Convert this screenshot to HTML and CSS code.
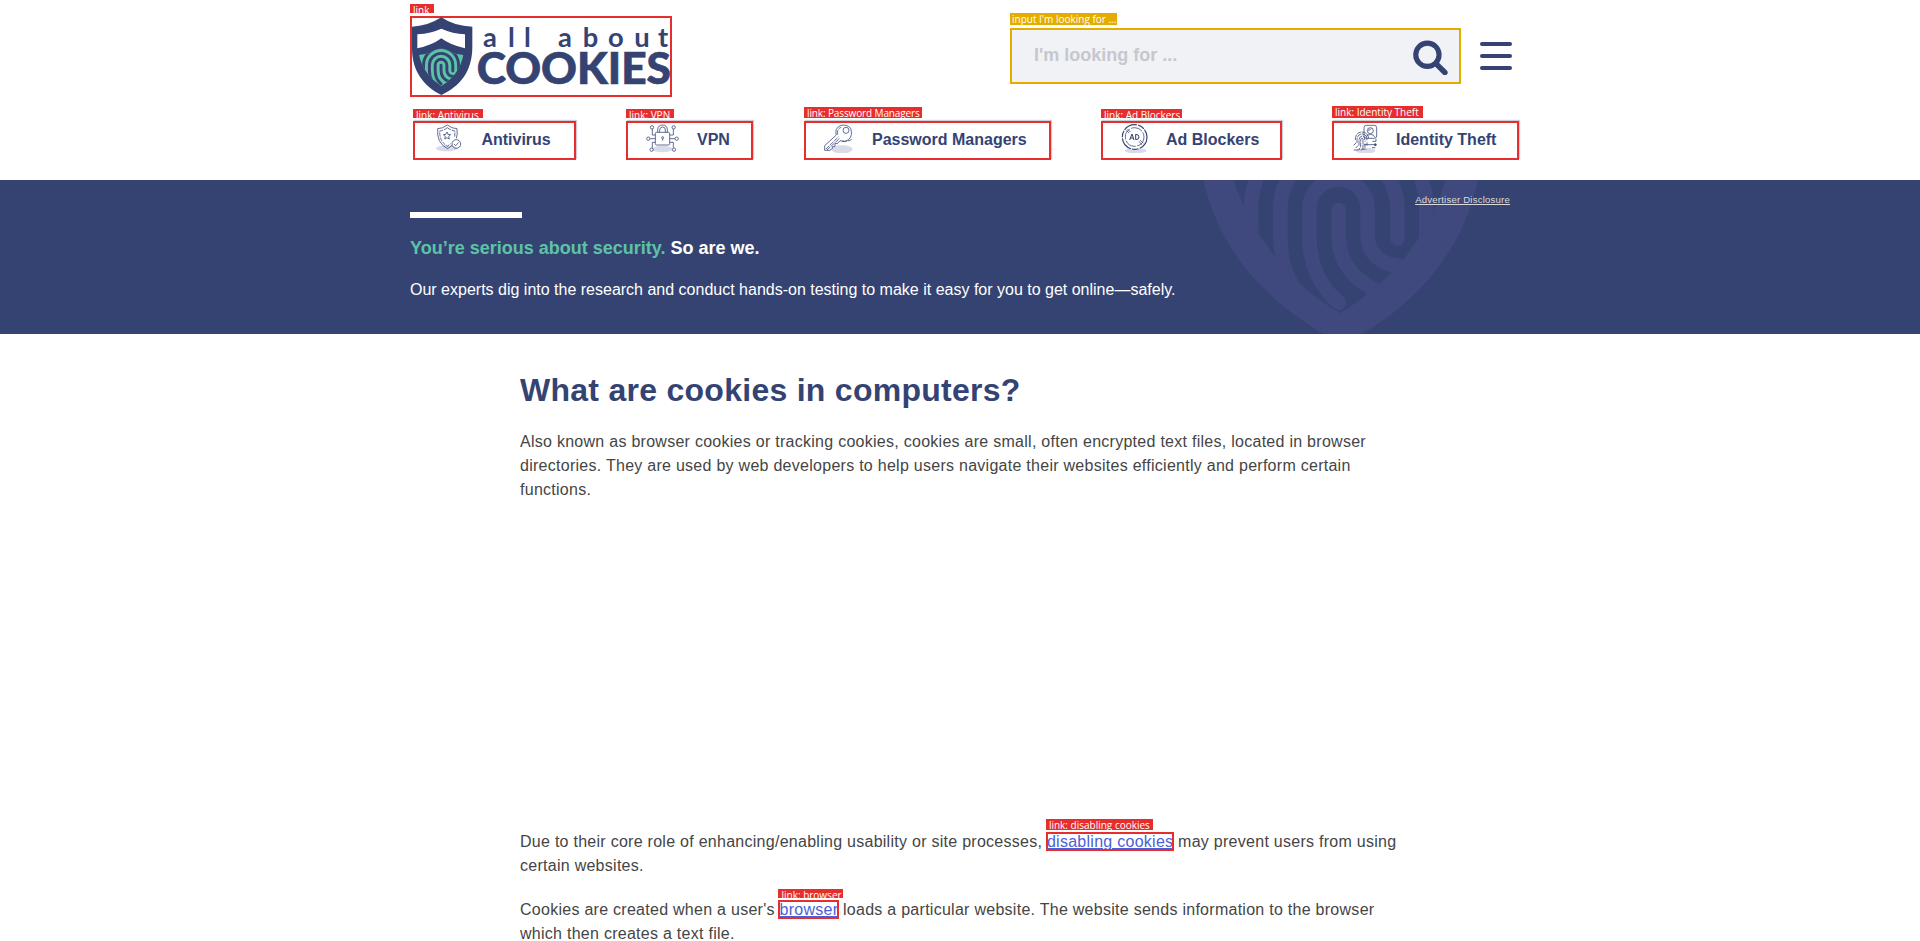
FILE: index.html
```html
<!DOCTYPE html>
<html lang="en">
<head>
<meta charset="utf-8">
<title>All About Cookies</title>
<link rel="stylesheet" href="styles.css">
</head>
<body>
<header class="header">
  <div class="top">
    <a class="logo box">
      <span class="tag tag-logo">link</span>
      <svg class="logo-art" viewBox="30 48 786 243" width="262" height="81">
        <path fill="#354373" d="M124 52Q82 79 36 80V145C36 215 72 259 124 285C180 258 217 215 217 140V80Q164 79 124 52Z"/>
        <path fill="#fff" d="M52 103Q94 100 124 86Q158 101 195 103V145Q150 135 124 115Q96 136 52 145Z"/>
        <clipPath id="core"><path d="M145-35L300-62Q476-200 650-62L810-35L795 30L762 122L717 203L674 264L631 309L558 376L480 430L345 328L283 258L234 188L191 104L162 30Z"/></clipPath>
        <g transform="translate(28 172) scale(.2)" clip-path="url(#core)">
          <path fill="#5cc3a5" d="M100-250H850V450H100Z"/>
          <g fill="none" stroke="#354373" stroke-width="44" stroke-linecap="round">
            <path d="M476 120V200C476 280 530 340 600 365"/>
            <path d="M476 398C420 350 388 280 388 200V116A87.500 87.500 0 0 1 563 116V195C563 250 605 288 665 288"/>
            <path d="M652 206V116A175.500 175.500 0 0 0 301 116V190C301 250 308 300 340 350"/>
            <path d="M213 220V116A263 263 0 0 1 739 116V220"/>
          </g>
        </g>
        <text class="word-small" y="140" x="249 324 372 474 548 624 703 774">allabout</text>
        <text class="word-big" x="230" y="251" textLength="583" lengthAdjust="spacingAndGlyphs">COOKIES</text>
      </svg>
    </a>
    <div class="tools">
      <div class="search box">
        <span class="tag tag-input">input I'm looking for ...</span>
        <span class="placeholder">I'm looking for ...</span>
        <svg class="glass" viewBox="0 0 102 103" width="35" height="35.300"><g fill="none" stroke="#354373"><circle cx="42" cy="43" r="34" stroke-width="15"/><path d="M70 72L93 95" stroke-width="16" stroke-linecap="round"/></g></svg>
      </div>
      <div class="menu"><i></i><i></i><i></i></div>
    </div>
  </div>
  <nav class="nav">
    <a class="item box antivirus"><span class="tag">link: Antivirus</span>
      <svg viewBox="102 70 90 90" width="30" height="30"><ellipse class="shade" cx="140" cy="146" rx="32" ry="9"/><g class="line"><path d="M142 76Q128 87 113 87Q109 129 142 147Q150 143 156 137M142 76Q156 87 171 87Q173 105 169 116"/><path d="M142 84Q130 93 119 94Q118 125 142 140L152 132M142 84Q154 93 165 94L164 112" stroke-dasharray="12 3"/><path d="M141 97l3 7 8 1-6 5 2 8-7-4-7 4 2-8-6-5 8-1Z"/><circle cx="169" cy="133" r="13"/><path d="M162 133l5 5 9-10"/></g></svg>Antivirus</a>
    <a class="item box vpn"><span class="tag">link: VPN</span>
      <svg viewBox="739 70 102 90" width="34" height="30"><ellipse class="shade" cx="788" cy="148" rx="31" ry="10"/><g class="line"><rect x="767" y="98" width="43" height="38" rx="4" fill="#fff"/><path d="M774 98V90Q775 76 789 76Q802 76 803 90V98M780 98V91Q781 82 789 82Q797 82 797 91V98M767 106H758V88M767 117H752M767 128H758V144M810 106H821V88M810 117H826M810 128H821V144M789 117V123"/><circle cx="789" cy="114" r="3"/><circle cx="757" cy="83" r="5"/><circle cx="822" cy="83" r="5"/><circle cx="746" cy="117" r="5"/><circle cx="831" cy="117" r="5"/><circle cx="756" cy="150" r="5"/><circle cx="823" cy="150" r="5"/></g></svg>VPN</a>
    <a class="item box password"><span class="tag">link: Password Managers</span>
      <svg viewBox="98 70 90 90" width="30" height="30"><ellipse class="shade" cx="155" cy="149" rx="32" ry="12"/><g class="line"><path fill="#fff" d="M103 152V138L138 106Q132 86 150 78Q168 72 181 86Q188 107 175 120Q163 130 149 123L142 131L134 132V140L126 141V147L118 152Z"/><path d="M107 148L145 111M110 151L149 115M142 105Q138 90 152 83M155 124Q174 127 184 119" stroke-dasharray="14 3"/><circle cx="167" cy="92" r="9"/></g></svg>Password Managers</a>
    <a class="item box ads"><span class="tag">link: Ad Blockers</span>
      <svg viewBox="90 72 90 90" width="30" height="30"><ellipse class="shade" cx="137" cy="155" rx="33" ry="8"/><g class="line"><circle cx="134" cy="114" r="37" fill="#fff" stroke-width="3.500" stroke-dasharray="42 4 20 3"/><circle cx="134" cy="114" r="28" stroke-dasharray="36 4"/><path d="M109 94L117 102M113 91L121 99M146 127L156 137M150 123L160 133"/><path stroke-width="3" d="M119 123L126 105L132 123M121 117H130M137 106V122Q147 122 147 114Q147 106 137 106Z"/></g></svg>Ad Blockers</a>
    <a class="item box identity"><span class="tag">link: Identity Theft</span>
      <svg viewBox="782 70 90 90" width="30" height="30"><ellipse class="shade" cx="826" cy="153" rx="29" ry="9"/><g class="line"><rect x="821" y="77" width="38" height="39" rx="7"/><circle cx="840" cy="93" r="9"/><path d="M826 113Q829 105 840 104Q851 105 854 113M833 92Q840 92 843 86"/><path stroke-dasharray="15 2" d="M795 121Q795 97 816 97Q832 98 835 116M800 130V119Q802 102 817 103Q830 105 830 122M806 137V120Q808 109 817 109Q824 111 824 126M811 143V121Q812 114 818 116V148M824 132V144M830 128V138M790 151H807V145M796 145L804 137M790 137L797 130M811 151Q823 146 829 150"/><path d="M820 135H852M846 125H857V118M845 144H855"/><circle cx="855" cy="135" r="3" fill="#354373"/></g></svg>Identity Theft</a>
  </nav>
</header>
<section class="banner">
  <svg class="watermark" viewBox="0 30 1050 462" width="350" height="154" preserveAspectRatio="none">
    <path fill="#40497d" d="M70 30C118 235 235 372 430 492H545C730 385 856 220 893 30Z"/>
    <clipPath id="inner"><path d="M162 30Q167 60 191 104Q208 147 234 188L283 258L345 328Q405 386 480 430Q520 407 558 376L597 345L631 309L674 264L717 203Q750 156 762 122Q780 90 795 30Z"/></clipPath>
    <g clip-path="url(#inner)">
      <path fill="#354373" d="M100 30H850V450H100Z"/>
      <g fill="none" stroke="#40497d" stroke-width="44" stroke-linecap="round">
        <path d="M476 120V200C476 280 530 340 600 365"/>
        <path d="M476 398C420 350 388 280 388 200V116A87.500 87.500 0 0 1 563 116V195C563 250 605 288 665 288"/>
        <path d="M652 206V116A175.500 175.500 0 0 0 301 116V190C301 250 308 300 340 350"/>
        <path d="M213 220V116A263 263 0 0 1 739 116V220"/>
      </g>
    </g>
  </svg>
  <div class="banner-inner">
    <div class="pitch">
      <div class="rule"></div>
      <h2><em>You’re serious about security.</em> So are we.</h2>
      <p>Our experts dig into the research and conduct hands-on testing to make it easy for you to get online—safely.</p>
    </div>
    <a class="disclosure">Advertiser Disclosure</a>
  </div>
</section>
<main class="article">
  <h1>What are cookies in computers?</h1>
  <p>Also known as browser cookies or tracking cookies, cookies are small, often encrypted text files, located in browser<br>directories. They are used by web developers to help users navigate their websites efficiently and perform certain<br>functions.</p>
  <div class="media"></div>
  <p>Due to their core role of enhancing/enabling usability or site processes, <a class="ref"><span class="tag tag-disabling">link: disabling cookies</span>disabling cookies</a> may prevent users from using<br>certain websites.</p>
  <p>Cookies are created when a user's <a class="ref"><span class="tag tag-browser">link: browser</span>browser</a> loads a particular website. The website sends information to the browser<br>which then creates a text file.</p>
</main>
</body>
</html>
```
FILE: styles.css
```css
* { box-sizing: border-box; }
body { margin: 0; height: 941px; overflow: hidden; background: #fff; font-family: "Liberation Sans", Arial, sans-serif; font-size: 16px; line-height: 24px; color: #454545; }
h1, h2, p { margin: 0; }
.header { height: 180px; padding: 16px 0 0 410px; }
.top { display: flex; width: 1102px; height: 105px; justify-content: space-between; align-items: flex-start; }
.box { position: relative; border: 2px solid #e62e2e; }
.logo { display: block; width: 262px; height: 81px; }
.logo-art { display: block; margin: -2px; }
.word-small { font: 700 82px Lato, sans-serif; fill: #354373; }
.word-big { font: 900 131px Lato, sans-serif; fill: #354373; stroke: #354373; stroke-width: 2px; }
.tag { position: absolute; left: -2px; top: -14px; height: 9px; padding-left: 3px; overflow: hidden; white-space: nowrap; background: #e62e2e; color: #fff; font: 400 10px/13px "Open Sans", sans-serif; letter-spacing: 0; }
.tag-logo { width: 24px; }
.antivirus .tag { width: 70px; }
.vpn .tag { width: 48px; }
.password .tag { top: -16px; width: 118px; height: 11px; letter-spacing: -.12px; }
.ads .tag { width: 81px; }
.identity .tag { top: -17px; width: 91px; height: 12px; }
.tools { display: flex; margin-top: 12px; gap: 19px; }
.search { display: flex; justify-content: space-between; width: 451px; height: 56px; padding: 10px 11px 0 22px; border-color: #e5ac00; background: #f1f2f6; }
.search .tag-input { top: -17px; width: 107px; height: 12px; padding-left: 2px; background: #e5ac00; }
.placeholder { margin-top: 3px; color: #c6c7cf; font-size: 18px; font-weight: 700; }
.menu { display: flex; flex-direction: column; gap: 8px; width: 32px; padding-top: 14px; }
.menu i { height: 4px; border-radius: 2px; background: #354373; }
.nav { display: flex; margin-left: 3px; }
.item { display: flex; align-items: flex-start; height: 39px; color: #354373; font-weight: 700; line-height: 33px; box-shadow: 1px -1px 1px #ccd0d6; white-space: nowrap; }
.item svg { flex: none; margin-right: 17px; }
.antivirus { width: 163px; margin-right: 50px; padding-left: 19px; }
.antivirus svg { margin-right: 17.4px; }
.vpn { width: 127px; margin-right: 51px; padding-left: 18px; }
.password { width: 247px; margin-right: 50px; padding-left: 17px; }
.password svg { margin-right: 19px; }
.ads { width: 181px; margin-right: 50px; padding-left: 17px; }
.ads svg { margin-right: 16px; }
.identity svg { margin-right: 15px; }
.identity { width: 187px; padding-left: 17px; }
.line { fill: none; stroke: #354373; stroke-width: 2.3; }
.shade { fill: #d9dbe8; }
.banner { position: relative; height: 154px; background: #354373; color: #fff; }
.watermark { position: absolute; left: 1180px; top: 0; }
.banner-inner { position: relative; display: flex; justify-content: space-between; width: 1100px; margin-left: 410px; }
.rule { width: 112px; height: 6px; margin-top: 32px; background: #fff; }
.pitch h2 { margin: 18px 0; font-size: 18px; line-height: 24px; }
.pitch em { color: #5cc3a5; font-style: normal; }
.pitch p { white-space: nowrap; }
.disclosure { margin-top: 14px; color: #d9d9d9; font-size: 9.6px; letter-spacing: .2px; line-height: 12px; text-decoration: underline; white-space: nowrap; }
.article { width: 900px; margin-left: 520px; padding-top: 37px; letter-spacing: .27px; white-space: nowrap; }
.article h1 { margin-bottom: 21px; color: #354373; font-size: 32px; line-height: 38px; }
.article p { margin-bottom: 20px; }
.media { height: 308px; }
.ref { position: relative; color: #4c5fd7; text-decoration: underline; outline: 2px solid #e62e2e; outline-offset: -1px; }
.ref .tag { left: -1px; height: 11px; top: -14px; }
.tag-disabling { width: 107px; }
.ref .tag-browser { width: 65px; height: 9px; top: -12px; }
```
